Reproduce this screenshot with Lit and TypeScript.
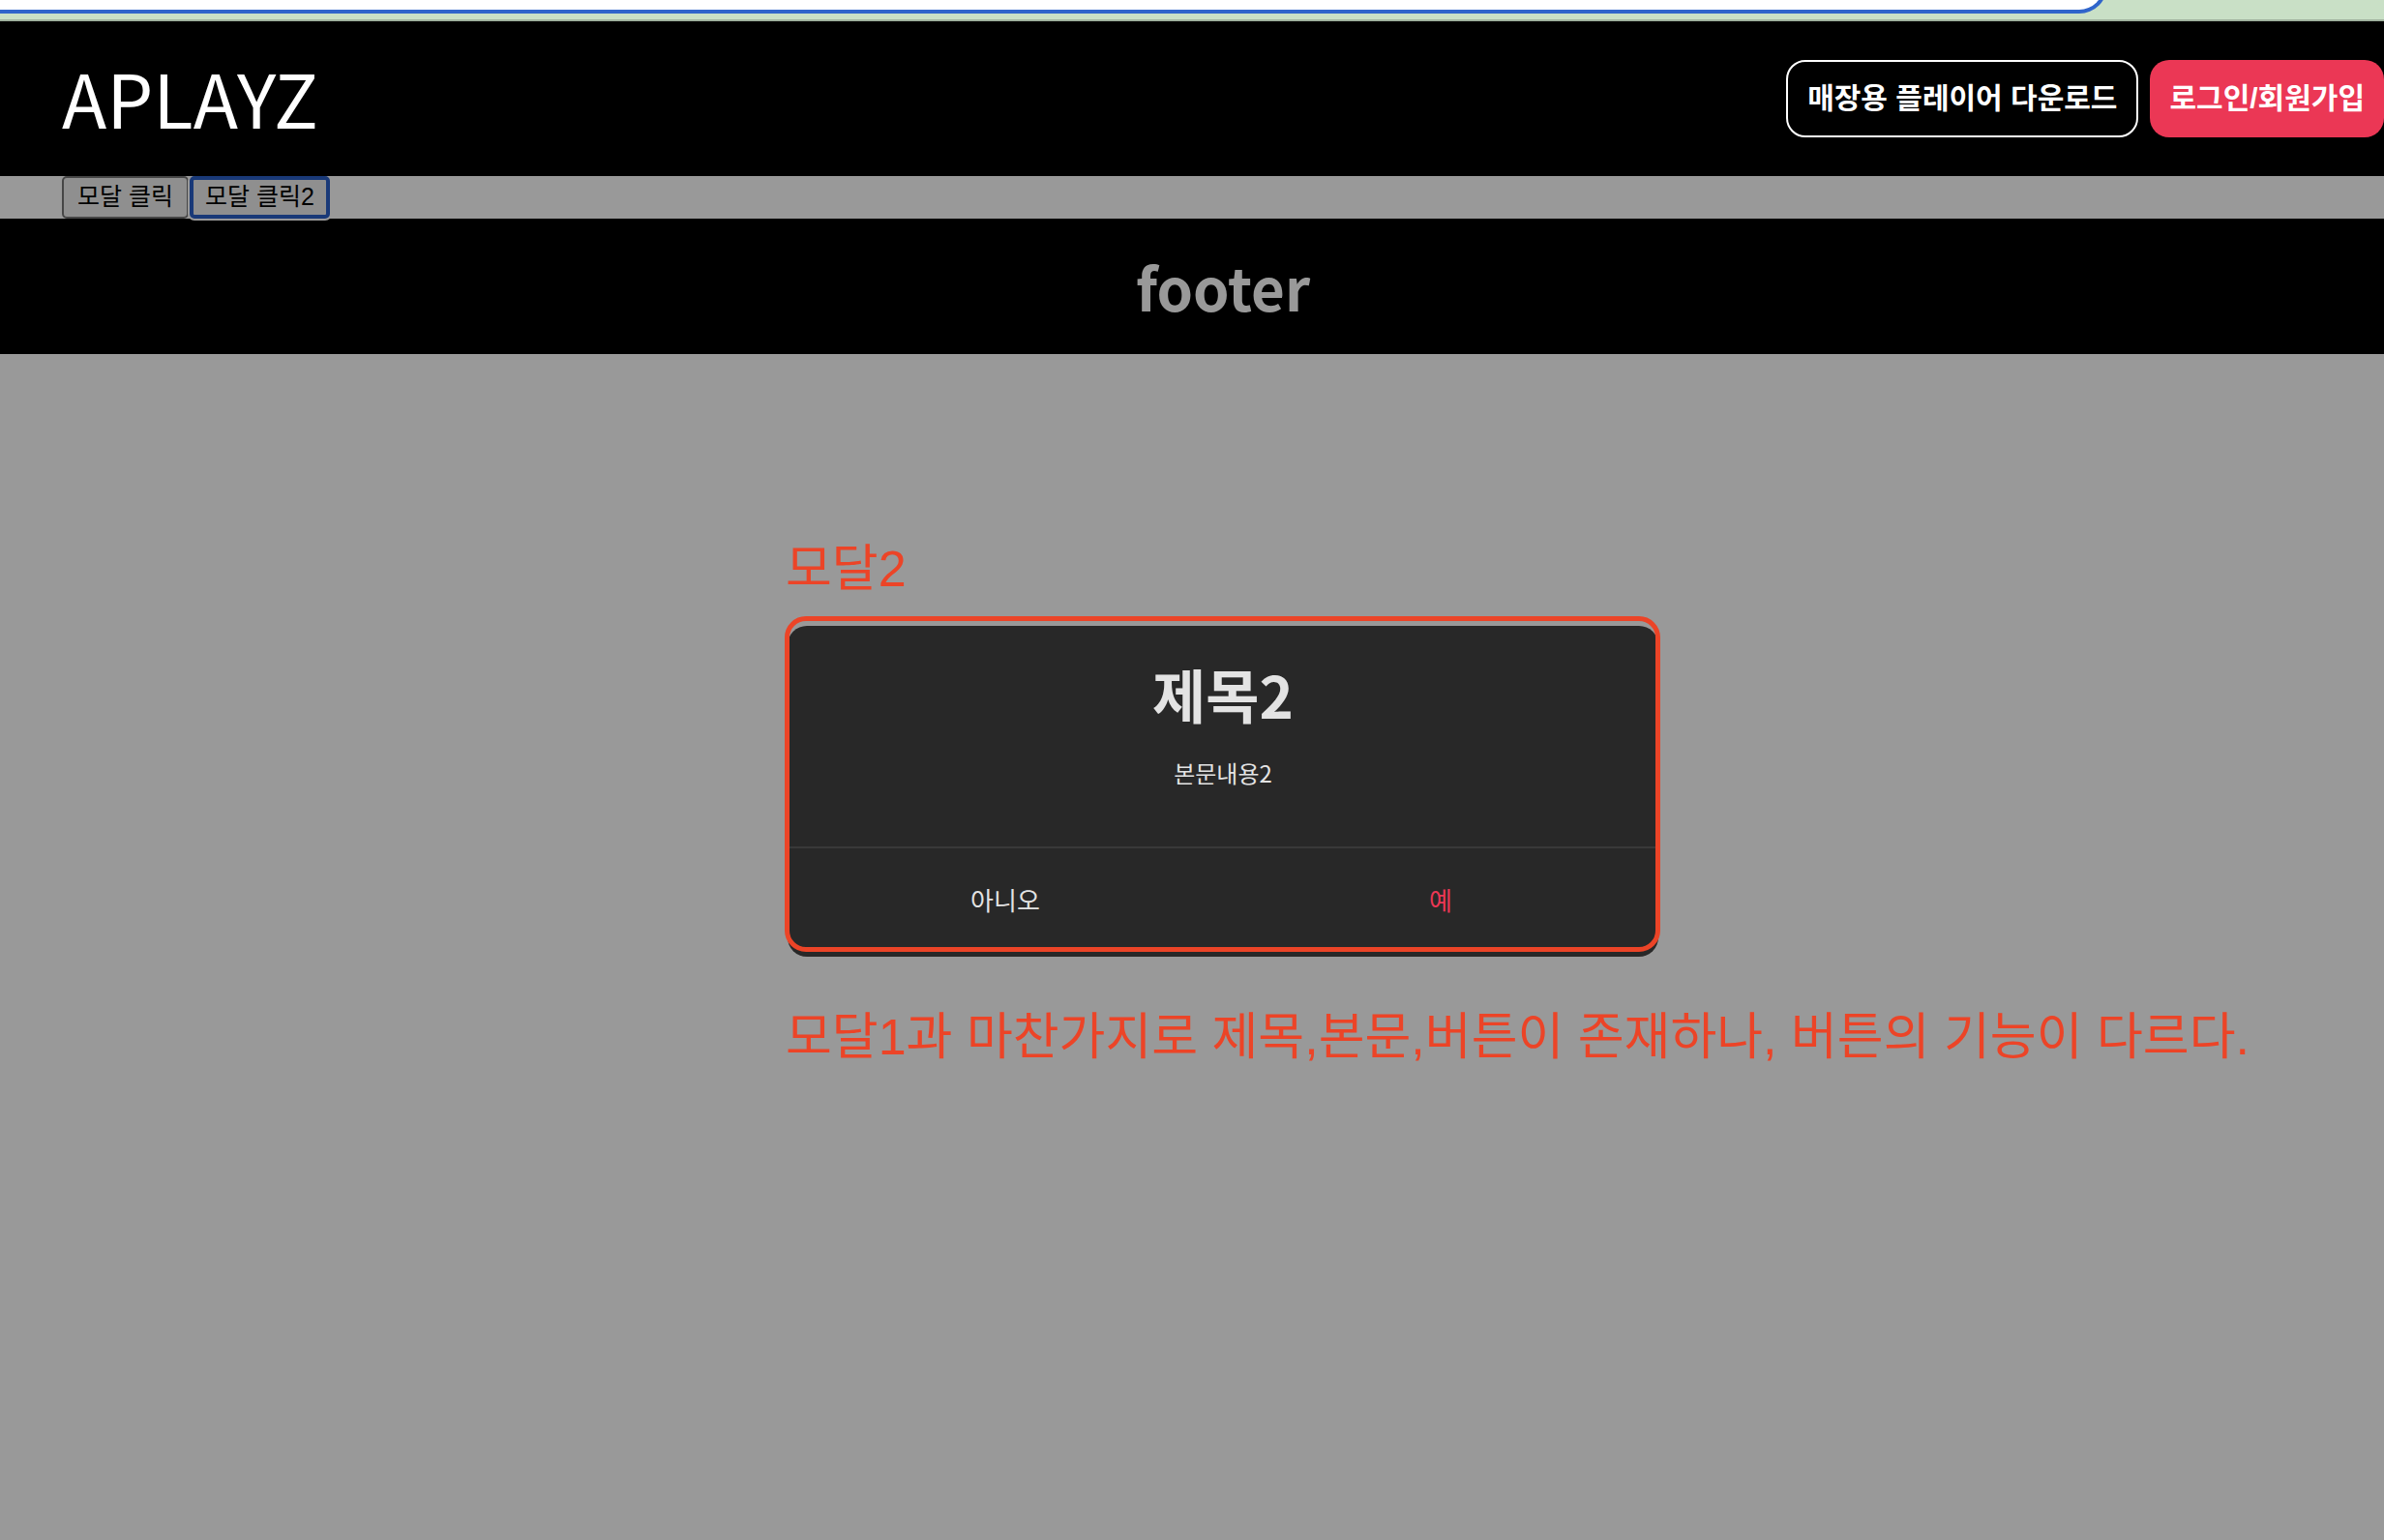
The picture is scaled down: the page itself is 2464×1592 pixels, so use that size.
import { LitElement, html, css } from "lit";
import { customElement, state } from "lit/decorators.js";

@customElement("app-header")
export class AppHeader extends LitElement {
  static styles = css`
    :host {
      display: block;
      background: #000;
      color: #fff;
    }
    .bar {
      display: flex;
      align-items: center;
      justify-content: space-between;
      height: 160px;
      padding: 0 64px;
      box-sizing: border-box;
    }
    .logo {
      padding-bottom: 4px;
      font-size: 76px;
      line-height: 112px;
      color: inherit;
      text-decoration: none;
    }
    .actions {
      display: flex;
      gap: 12px;
      align-self: flex-start;
      padding-top: 40px;
    }
    .action {
      height: 80px;
      padding: 0 20px;
      border: 0;
      border-radius: 20px;
      background: #000;
      color: #fff;
      font: 700 30px/44px "Liberation Sans", "Noto Sans CJK KR", sans-serif;
      white-space: nowrap;
    }
    .outlined {
      border: 2px solid #fff;
    }
    .primary {
      background: #eb3755;
    }
  `;

  render() {
    return html`
      <header class="bar">
        <a class="logo" href="#">APLAYZ</a>
        <nav class="actions">
          <button class="action outlined" type="button">매장용 플레이어 다운로드</button>
          <button class="action primary" type="button">로그인/회원가입</button>
        </nav>
      </header>
    `;
  }
}

@customElement("confirm-modal")
export class ConfirmModal extends LitElement {
  static styles = css`
    :host {
      display: block;
      position: relative;
      width: 900px;
    }
    .panel {
      overflow: hidden;
      border-radius: 20px;
      background: #282828;
      color: #e3e3e3;
      text-align: center;
    }
    .content {
      display: flex;
      flex-direction: column;
      gap: 20px;
      padding: 26px 0 58px;
    }
    .title {
      margin: 0;
      font-size: 60px;
      font-weight: 700;
      line-height: 88px;
    }
    .text {
      margin: 0;
      font-size: 24px;
      line-height: 36px;
    }
    .choices {
      display: grid;
      grid-template-columns: 1fr 1fr;
      border-top: 2px solid #393939;
    }
    .choice {
      height: 112px;
      padding: 0 0 6px;
      border: 0;
      background: none;
      color: #e3e3e3;
      font: 400 26px/40px "Noto Sans CJK KR", sans-serif;
    }
    .confirm {
      color: #eb3755;
    }
    .frame {
      position: absolute;
      inset: -10px -2px 5px -3px;
      border: 5px solid #ec4427;
      border-radius: 22px;
      pointer-events: none;
    }
    .note {
      position: absolute;
      left: -2px;
      margin: 0;
      color: #ec4427;
      font: 400 52px/76px "Liberation Sans", "Noto Sans CJK KR", sans-serif;
      white-space: nowrap;
    }
    .above {
      bottom: 100%;
      margin-bottom: 21px;
    }
    .below {
      top: 100%;
      margin-top: 45px;
    }
  `;

  render() {
    return html`
      <section class="panel" role="dialog" aria-labelledby="title">
        <div class="content">
          <h1 class="title" id="title">제목2</h1>
          <p class="text">본문내용2</p>
        </div>
        <div class="choices">
          <button class="choice" type="button">아니오</button>
          <button class="choice confirm" type="button">예</button>
        </div>
      </section>
      <div class="frame"></div>
      <p class="note above">모달2</p>
      <p class="note below">모달1과 마찬가지로 제목,본문,버튼이 존재하나, 버튼의 기능이 다르다.</p>
    `;
  }
}

@customElement("app-root")
export class AppRoot extends LitElement {
  static styles = css`
    :host {
      display: block;
      height: 100vh;
      overflow: hidden;
      background: #fff;
      color: #000;
      font-family: "Noto Sans CJK KR", sans-serif;
    }
    .browser {
      height: 22px;
      overflow: hidden;
      box-sizing: border-box;
      border-bottom: 2px solid #a0b29f;
      background: #c9e0c6;
      display: flex;
      align-items: flex-end;
      padding-bottom: 6px;
    }
    .address {
      flex: none;
      width: calc(100% - 286px);
      height: 64px;
      box-sizing: border-box;
      border: 4px solid #2f64cb;
      border-left: 0;
      border-radius: 0 29px 29px 0;
      background: #fff;
    }
    .page {
      position: relative;
      width: calc(100% + 64px);
      height: 100vh;
      background: #fff;
    }
    .top {
      position: relative;
      z-index: 2;
    }
    .triggers {
      display: flex;
      gap: 1px;
      height: 44px;
      padding: 0 64px;
    }
    .trigger {
      padding: 0 14px 2px;
      border: 2px solid #767676;
      border-radius: 5px;
      background: #efefef;
      color: #000;
      font: 400 25px/36px "Liberation Sans", "Noto Sans CJK KR", sans-serif;
    }
    .trigger.current {
      padding: 0 12px 2px;
      border: 4px solid #2a5fc8;
      line-height: 34px;
      box-shadow: 0 0 0 2px #fff;
      z-index: 1;
    }
    .footer {
      height: 140px;
      background: #000;
      color: #fff;
      text-align: center;
    }
    .footer-title {
      margin: 0;
      padding-top: 26px;
      font-size: 60px;
      font-weight: 700;
      line-height: 88px;
    }
    .backdrop {
      position: absolute;
      inset: 0;
      z-index: 1;
      display: flex;
      align-items: center;
      justify-content: center;
      background: rgba(0, 0, 0, 0.4);
    }
  `;

  @state() private selected = 1;

  private labels = ["모달 클릭", "모달 클릭2"];

  render() {
    return html`
      <div class="browser"><div class="address"></div></div>
      <div class="page">
        <app-header class="top"></app-header>
        <main class="triggers">
          ${this.labels.map(
            (label, i) => html`<button
              type="button"
              class="trigger ${i === this.selected ? "current" : ""}"
              @click=${() => (this.selected = i)}
            >${label}</button>`,
          )}
        </main>
        <footer class="footer"><h1 class="footer-title">footer</h1></footer>
        <div class="backdrop"><confirm-modal></confirm-modal></div>
      </div>
    `;
  }
}
